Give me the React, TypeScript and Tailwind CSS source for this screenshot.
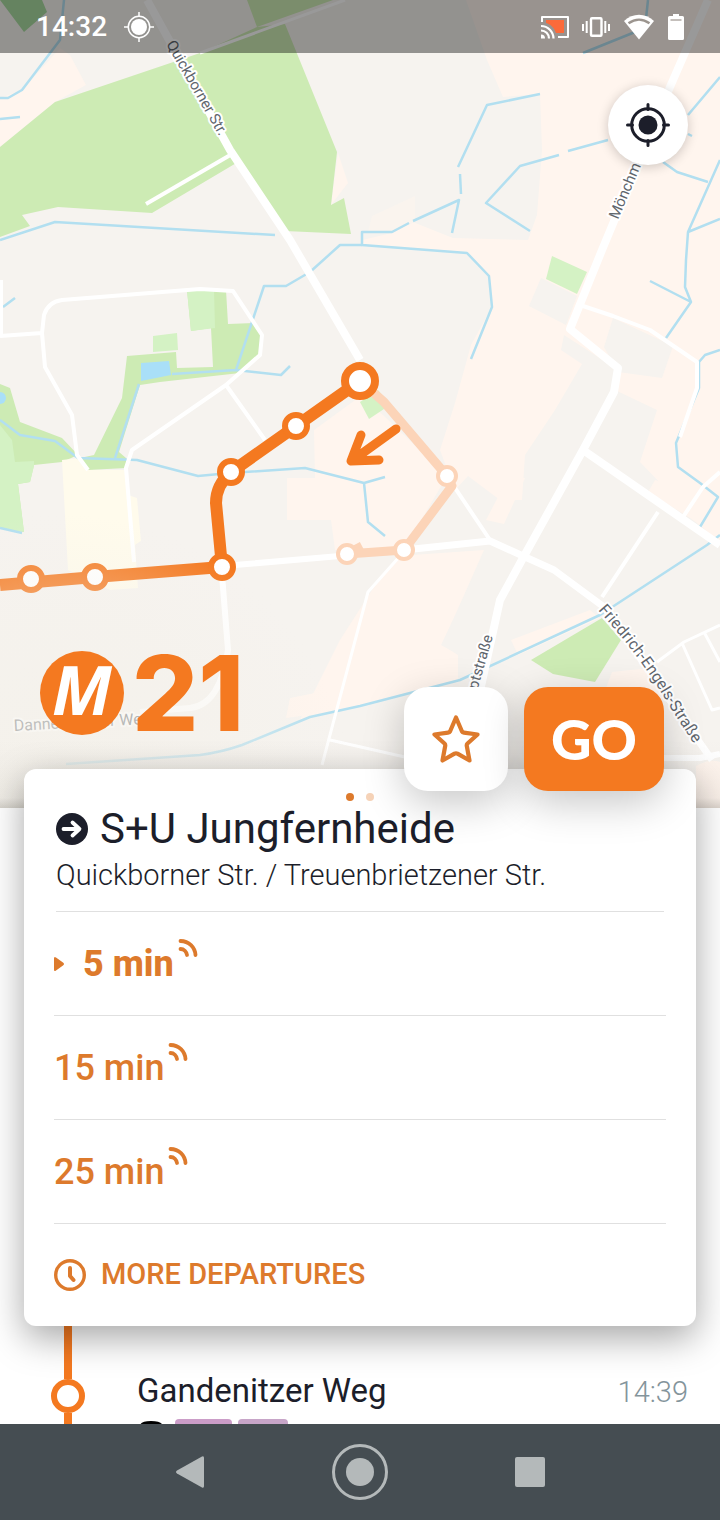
import React from "react";

const departures = [
  { label: "5 min", next: true },
  { label: "15 min", next: false },
  { label: "25 min", next: false },
];

const routeStops = [
  [31, 579],
  [95, 577],
  [222, 567],
  [231, 472],
  [296, 426],
];

const passedStops = [
  [447, 476],
  [404, 550],
  [347, 554],
];

const CityMap = () => (
  <svg
    className="absolute inset-0 h-full w-full"
    viewBox="0 0 720 808"
    preserveAspectRatio="xMidYMin slice"
    aria-hidden="true"
  >
    <defs>
      <radialGradient id="fade" gradientUnits="userSpaceOnUse" cx="60" cy="808" r="420">
        <stop offset="0" stopColor="#f4f1ea" stopOpacity="0.85" />
        <stop offset="0.45" stopColor="#f4f1ea" stopOpacity="0.4" />
        <stop offset="0.7" stopColor="#f4f1ea" stopOpacity="0" />
      </radialGradient>
      <linearGradient id="edge" x1="0" y1="0" x2="0" y2="1">
        <stop offset="0" stopColor="#8a867c" stopOpacity="0" />
        <stop offset="0.85" stopColor="#8a867c" stopOpacity="0.06" />
        <stop offset="1" stopColor="#8a867c" stopOpacity="0.3" />
      </linearGradient>
      <path id="engels" d="M598 610 L624 640 Q652 676 668 704 L702 756" />
    </defs>

    <rect width="720" height="808" fill="#f6f3ef" />

    {/* Residential areas */}
    <g fill="#fff5ee">
      <path d="M466 0 L487 60 L503 97 L540 94 L542 150 L537 215 L528 240 L453 238 L413 222 L392 233 L362 240 V245 L467 253 L489 276 L492 307 L471 345 L455 403 L440 450 L455 490 L490 540 L720 560 V0 Z" />
      <path d="M0 98 L22 90 L60 48 L70 55 L86 85 L55 102 L0 147 Z" />
      <path d="M338 153 L348 183 L331 205 Z" />
      <path d="M314 430 L362 395 L447 476 L404 550 H335 L331 520 H287 V478 H315 Z" />
      <path d="M398 556 L484 550 L442 645 L458 655 V682 L300 720 L340 640 L372 590 Z" />
      <path d="M290 698 L340 688 L330 712 L286 718 Z" />
    </g>
    <path d="M372 216 L415 196 V222 L392 232 H368 Z" fill="#faf4ee" />

    {/* Open land */}
    <g fill="#f6f3ef">
      <path d="M541 278 L577 296 L566 325 L529 306 Z" />
      <path d="M613 318 L673 346 L662 378 L618 372 L604 347 Z" />
      <path d="M564 335 L618 370 L615 390 L657 410 L640 462 L720 545 V808 H330 L360 706 L460 680 V655 L441 645 L487 548 L455 490 L468 476 L500 500 L522 500 L525 455 L555 410 L582 364 L561 350 Z" />
    </g>
    <g fill="#fff5ee">
      <path d="M508 478 L525 478 L504 524 L486 520 Z" />
      <path d="M648 492 L655 480 L720 500 V540 L690 518 Z" />
      <path d="M511 640 L590 610 L600 618 L518 655 Z" />
      <path d="M612 672 L650 668 L668 700 L606 688 Z" />
      <path d="M696 766 Q710 758 720 762 V808 H696 Z" />
    </g>

    {/* Parks and fields */}
    <g fill="#cdebb4">
      <path d="M0 147 L55 102 L200 53 L257 27 L285 24 L337 152 L331 205 L344 198 L351 234 L285 231 L238 162 L152 213 L58 207 L22 215 L30 226 L0 237 Z" />
      <path d="M247 0 L257 27 L333 0 Z" />
      <path d="M187 290 L226 290 L228 324 L254 323 L263 340 L259 355 L240 373 L160 382 L140 385 L119 452 L126 458 V468 L88 470 L80 458 L94 455 L122 398 L127 356 L176 352 L177 368 L213 367 L211 328 L191 331 Z" />
      <path d="M0 384 L10 388 L20 422 L62 438 L78 455 L62 462 L34 465 L30 482 L18 484 L24 532 L0 528 Z" />
      <path d="M602 618 L621 640 L595 682 L553 674 L531 660 Z" />
    </g>
    <path d="M0 0 H42 L47 12 L24 32 Z" fill="#a8dba0" />
    <g fill="#d4f2c4">
      <path d="M187 290 L214 290 L215 328 L191 331 Z" />
      <path d="M153 336 L177 333 L178 350 L153 352 Z" />
      <path d="M0 425 L12 440 L15 462 L34 461 V466 L30 482 L18 484 L24 532 L0 528 Z" />
      <path d="M552 256 L587 272 L577 294 L546 279 Z" />
      <path d="M360 402 L378 390 L390 405 L369 419 Z" />
    </g>
    <path d="M62 460 L80 458 L88 470 L125 470 L128 495 L137 498 L141 541 L135 545 L138 588 L110 590 L68 570 Z" fill="#fffbec" />

    {/* Water */}
    <path d="M141 363 L169 361 L171 375 L141 381 Z" fill="#a9dff8" />
    <circle cx="0" cy="398" r="6" fill="#a9dff8" />
    <g fill="none" stroke="#b2dff0" strokeWidth="2.5" strokeLinejoin="round">
      <path d="M64 0 L60 40 L22 90 L8 98 H0 M0 119 L20 117" />
      <path d="M0 240 L55 222 L275 235 M3 307 L15 298" />
      <path d="M540 94 L487 105 L458 167 M460 174 L461 194 M452 233 L459 200 L413 221 M409 223 L392 232 H362 V245 L467 253 L489 276 L492 307 L471 359" />
      <path d="M362 245 H340 L310 272 L286 286 H264 L236 370 L172 374 M236 370 L281 375 L290 366" />
      <path d="M139 384 L115 458 M0 420 L20 435 L55 441 L78 458 L137 460 L198 476 L230 473 L305 468 L364 483 L385 477 M364 483 L368 522 L385 536" />
      <path d="M648 0 L645 28 L583 53 M608 140 L568 151 M559 155 L520 166 L486 203 L530 231" />
      <path d="M720 77 L688 115 M688 134 L692 136 M663 162 L677 172 L708 182 M720 160 L688 232 L686 260 L685 287 L691 302 L666 338 M688 232 L720 219 M650 281 L691 302" />
      <path d="M720 350 L705 355 L699 362 L699 388 L676 443 L678 467 L700 483 L718 497 L700 527" />
      <path d="M66 764 L200 755 Q222 752 242 745 L310 717 L360 706 L460 680 L600 615 L707 545 L720 535 M0 528 L22 533" />
    </g>

    {/* Roads */}
    <g fill="none" stroke="#ffffff" strokeLinejoin="round">
      <path d="M147 0 L230 150 L290 240 L360 360" strokeWidth="8" />
      <path d="M146 204 L232 154" strokeWidth="4" />
      <path d="M200 53 L345 0" strokeWidth="3" />
      <path d="M708 0 L670 87 L602 250 L570 329 L618 368 L614 392 L583 450 L523 558 L500 600 L478 700" strokeWidth="8" />
      <path d="M583 450 L720 545" strokeWidth="8" />
      <path d="M404 550 L490 541 L523 556 L554 570 L604 607 L712 760" strokeWidth="7" />
      <path d="M235 565 L340 556 M222 575 L228 650 Q220 705 190 708 L140 712" strokeWidth="6" />
      <path d="M580 305 L613 316 L650 330 L697 362 V388 L680 437 M447 476 L490 540 M658 512 L602 597 M720 472 L703 487 L683 517" strokeWidth="4" />
      <path d="M400 556 L368 592 L322 765 M657 662 L684 642 L720 625 M682 643 L712 710 L720 708 M704 632 L720 662 M330 740 L440 765" strokeWidth="3" />
      <path d="M640 758 H700 L720 754" strokeWidth="6" />
      <path d="M0 336 L42 333 L44 315 Q48 302 62 300 L200 289 L233 291 L262 335 L260 355 L226 385 L132 450 L126 468 L134 562 M42 333 L45 367 L72 415 L77 455 L88 470 M226 385 L265 440 M1 280 V336" strokeWidth="4" />
    </g>

    {/* Opposite direction */}
    <path d="M360 381 L384 402 L447 476 L452 486 L404 550 L347 554 L362 546" fill="none" stroke="#fcd4b8" strokeWidth="9" strokeLinejoin="round" />
    {passedStops.map(([x, y]) => (
      <circle key={`${x}-${y}`} cx={x} cy={y} r="9" fill="#fff" stroke="#fcd4b8" strokeWidth="4" />
    ))}

    {/* Current direction */}
    <path d="M0 585 L95 577 L222 567 L216 503 Q216 485 231 472 L360 381" fill="none" stroke="#f47920" strokeWidth="12" />
    {routeStops.map(([x, y]) => (
      <circle key={`${x}-${y}`} cx={x} cy={y} r="11" fill="#fff" stroke="#f47920" strokeWidth="6" />
    ))}
    <circle cx="360" cy="381" r="15" fill="#fff" stroke="#f47920" strokeWidth="8" />
    <path d="M396 429 L353 460 M361 435 L351 461 L379 460" fill="none" stroke="#f47920" strokeWidth="9" strokeLinecap="round" strokeLinejoin="round" />

    {/* Street names */}
    <g
      className="font-['Roboto',sans-serif] text-[15px]"
      fill="#5f666d"
      stroke="#fff"
      strokeWidth="4"
      strokeLinejoin="round"
      paintOrder="stroke"
    >
      <text transform="translate(166 44) rotate(60)">Quickborner Str.</text>
      <text transform="translate(618 220) rotate(-67)">Mönchmühler Str.</text>
      <text transform="translate(470 716) rotate(-74)">Hauptstraße</text>
      <text className="text-[16px]">
        <textPath href="#engels">Friedrich-Engels-Straße</textPath>
      </text>
      <text className="text-[16px]" transform="translate(14 731) rotate(-3)">Dannenwalder Weg</text>
    </g>

    <rect width="720" height="808" fill="url(#fade)" />
    <rect y="740" width="720" height="68" fill="url(#edge)" />
  </svg>
);

const StatusBar = () => (
  <div className="relative flex h-[53px] items-center justify-between bg-black/40 px-9 text-white">
    <div className="flex items-center gap-4">
      <span className="font-['Roboto',sans-serif] text-[28px] font-medium leading-8">14:32</span>
      <svg className="size-8" viewBox="0 0 32 32" fill="none" stroke="currentColor" strokeWidth="1.5" aria-hidden="true">
        <circle cx="16" cy="16" r="8" fill="currentColor" stroke="none" />
        <circle cx="16" cy="16" r="10.7" />
        <path d="M16 1v5M16 26v5M1 16h5M26 16h5" />
      </svg>
    </div>
    <div className="flex items-center gap-[13px]">
      <svg className="h-6 w-7" viewBox="0 0 28 24" fill="none" aria-hidden="true">
        <path d="M5 5h18v13h-8C13 12 9 9 5 8z" fill="#fb6a3a" />
        <path d="M1 7V2h26v20H17" stroke="currentColor" strokeWidth="2" strokeLinejoin="round" />
        <path d="M0 19.5a4 4 0 0 1 4 4H0z" fill="currentColor" />
        <path d="M0 15.500a8 8 0 0 1 8 8M0 11a12.500 12.500 0 0 1 12.500 12.500" stroke="currentColor" strokeWidth="2.200" />
      </svg>
      <svg className="h-5 w-7" viewBox="0 0 28 20" fill="none" stroke="currentColor" strokeWidth="2" aria-hidden="true">
        <rect x="9" y="1.200" width="10.500" height="17.600" rx="1" strokeWidth="2.400" />
        <path d="M1 7v7M4.700 4v12M27 7v7M23.300 4v12" />
      </svg>
      <svg className="h-[26px] w-8" viewBox="0 0 32 26" aria-hidden="true">
        <path d="M1 7C10-1.500 22-1.500 31 7L16 25.500z" fill="currentColor" />
        <path d="M5.500 9.300C12 4.500 20 4.500 26.500 9.300" fill="none" stroke="#9c958f" strokeWidth="2.500" />
      </svg>
      <svg className="h-[26px] w-4" viewBox="0 0 16 26" aria-hidden="true">
        <path d="M5 0h6v2h3.500A1.500 1.500 0 0 1 16 3.500v21a1.500 1.500 0 0 1-1.500 1.500h-13A1.500 1.500 0 0 1 0 24.500v-21A1.500 1.500 0 0 1 1.500 2H5z" fill="currentColor" />
        <path d="M2.500 6h11" stroke="#b0aaa5" strokeWidth="1.500" />
      </svg>
    </div>
  </div>
);

const LiveIcon = () => (
  <svg className="mb-8 ml-1 size-5" viewBox="0 0 20 20" fill="none" stroke="currentColor" strokeWidth="3.8" strokeLinecap="round" aria-hidden="true">
    <path d="M2.500 3C11 3 17 9.500 17.500 17" />
    <path d="M2.500 11c3.500 0 6 3 6.500 6" />
  </svg>
);

const App = () => {
  return (
    <div className="flex min-h-screen flex-col bg-white font-['Roboto',sans-serif] text-[#1c1e2a]">
      {/* Map */}
      <header className="relative flex aspect-[720/808] flex-col">
        <CityMap />
        <StatusBar />
        <div className="relative flex justify-end px-8 pt-8">
          <button
            type="button"
            aria-label="Show my location"
            className="flex size-20 items-center justify-center rounded-full bg-white shadow-[0_2px_12px_rgba(0,0,0,0.2)]"
          >
            <svg className="size-11" viewBox="0 0 44 44" fill="none" stroke="currentColor" strokeWidth="3" strokeLinecap="round" aria-hidden="true">
              <circle cx="22" cy="22" r="9.500" fill="currentColor" stroke="none" />
              <circle cx="22" cy="22" r="16.300" />
              <path d="M22 1.500v5M22 37.500v5M1.500 22h5M37.500 22h5" />
            </svg>
          </button>
        </div>
        <div className="relative z-20 mt-auto flex items-end justify-between pb-[17px] pl-10 pr-14">
          <h1 className="mb-14 flex items-center gap-2 text-[#f47920]">
            <span className="flex size-[84px] items-center justify-center rounded-full bg-[#f47920] pb-2 font-['Open_Sans',sans-serif] text-[68px] font-bold italic leading-none text-white">
              M
            </span>
            <span className="font-['Inter',sans-serif] text-[104px] font-extrabold leading-[84px]">21</span>
          </h1>
          <div className="flex gap-4">
            <button
              type="button"
              aria-label="Add to favourites"
              className="flex size-[104px] items-center justify-center rounded-3xl bg-white text-[#dd7a2c] shadow-[0_12px_40px_rgba(0,0,0,0.22)]"
            >
              <svg className="size-12" viewBox="0 0 48 48" fill="none" stroke="currentColor" strokeWidth="4.200" strokeLinejoin="round" aria-hidden="true">
                <path d="M24 2.500L30 16.500Q30.500 17.500 32 17.700L45.500 19.500 35.500 28.500Q34.500 29.500 34.800 31L37.500 45.500 25.500 38.700Q24 38 22.500 38.700L10.500 45.500 13.200 31Q13.500 29.500 12.500 28.500L2.500 19.500 16 17.700Q17.500 17.500 18 16.500Z" />
              </svg>
            </button>
            <button
              type="button"
              className="h-[104px] w-[140px] rounded-3xl bg-[#f47920] font-['Lato',sans-serif] text-[56px] font-black text-white shadow-[0_12px_40px_rgba(0,0,0,0.22)]"
            >
              GO
            </button>
          </div>
        </div>
      </header>

      {/* Departures */}
      <section className="relative z-10 mx-6 -mt-[39px] rounded-xl bg-white shadow-[0_12px_36px_rgba(0,0,0,0.35)]">
        <div className="mx-8 border-b border-[#e0e0e0] pb-[18px] pt-6">
          <div className="flex justify-center gap-3">
            <span className="size-2 rounded-full bg-[#dd7a2c]" />
            <span className="size-2 rounded-full bg-[#f6d3b8]" />
          </div>
          <h2 className="flex items-center gap-3 text-[42px] leading-14">
            <svg className="size-8" viewBox="0 0 32 32" aria-hidden="true">
              <circle cx="16" cy="16" r="16" fill="currentColor" />
              <path d="M7.500 16h15M16.500 9.500l7 6.500-7 6.500" fill="none" stroke="#fff" strokeWidth="3.800" strokeLinecap="round" strokeLinejoin="round" />
            </svg>
            S+U Jungfernheide
          </h2>
          <p className="text-[29px] font-light leading-9">Quickborner Str. / Treuenbrietzener Str.</p>
        </div>

        <ul className="px-[30px] text-[36px] leading-10 text-[#dd7a2c]">
          {departures.map((departure) => (
            <li key={departure.label} className="flex h-26 items-center border-b border-[#e0e0e0]">
              {departure.next && (
                <svg className="mr-[18px] h-4 w-[11px]" viewBox="0 0 11 16" fill="currentColor" aria-hidden="true">
                  <path d="M0 2.500Q0 0 2 1.500L9 6.500Q11 8 9 9.500L2 14.500Q0 16 0 13.500Z" />
                </svg>
              )}
              <span className={departure.next ? "font-extrabold" : "font-medium"}>{departure.label}</span>
              <LiveIcon />
            </li>
          ))}
        </ul>

        <button
          type="button"
          className="flex h-[102px] w-full items-center gap-[15px] px-[30px] text-[29px] font-medium text-[#dd7a2c]"
        >
          <svg className="size-8" viewBox="0 0 32 32" fill="none" stroke="currentColor" strokeWidth="3.400" strokeLinecap="round" strokeLinejoin="round" aria-hidden="true">
            <circle cx="16" cy="16" r="14.300" />
            <path d="M16 9v8l3.500 4" strokeWidth="4" />
          </svg>
          MORE DEPARTURES
        </button>
      </section>

      {/* Stops along the line */}
      <ul className="min-h-[98px] flex-1 basis-0 overflow-hidden">
        <li className="flex h-32 pl-[51px] pr-8">
          <div className="mr-[52px] flex flex-col items-center">
            <span className="h-[53px] w-2 bg-[#f47920]" />
            <span className="size-[34px] rounded-full border-6 border-[#f47920] bg-white" />
            <span className="w-2 flex-1 bg-[#f47920]" />
          </div>
          <div className="flex-1 pt-[45px]">
            <div className="flex h-10 items-baseline justify-between leading-10">
              <span className="text-[33px]">Gandenitzer Weg</span>
              <time className="text-[29px] font-light text-[#84949b]">14:39</time>
            </div>
            <div className="mt-2 flex gap-1.5">
              <svg className="mr-1 h-8 w-7" viewBox="0 0 28 32" aria-hidden="true">
                <path d="M3 30V7Q3 2 14 2T26 7V30Z" fill="#000" />
                <path d="M6 7h16v9H6z" fill="#fff" />
              </svg>
              <span className="h-8 w-[57px] rounded-sm bg-[#cb9dc8]" />
              <span className="h-8 w-[50px] rounded-sm bg-[#c7a5c8]" />
            </div>
          </div>
        </li>
      </ul>

      {/* System navigation */}
      <nav className="relative z-20 flex h-24 items-center justify-center gap-[114px] bg-[#454d52] text-[#b4b9ba]">
        <button type="button" aria-label="Back" className="flex size-14 items-center justify-center">
          <svg className="h-8 w-7" viewBox="0 0 28 32" fill="currentColor" aria-hidden="true">
            <path d="M26 .5Q28-.5 28 2V30Q28 32.500 26 31.500L1 17.500Q-1 16 1 14.500Z" />
          </svg>
        </button>
        <button type="button" aria-label="Home" className="flex size-14 items-center justify-center rounded-full border-3 border-current">
          <span className="size-7 rounded-full bg-current" />
        </button>
        <button type="button" aria-label="Recent apps" className="flex size-14 items-center justify-center">
          <span className="size-[30px] rounded-xs bg-current" />
        </button>
      </nav>
    </div>
  );
};

export default App;
